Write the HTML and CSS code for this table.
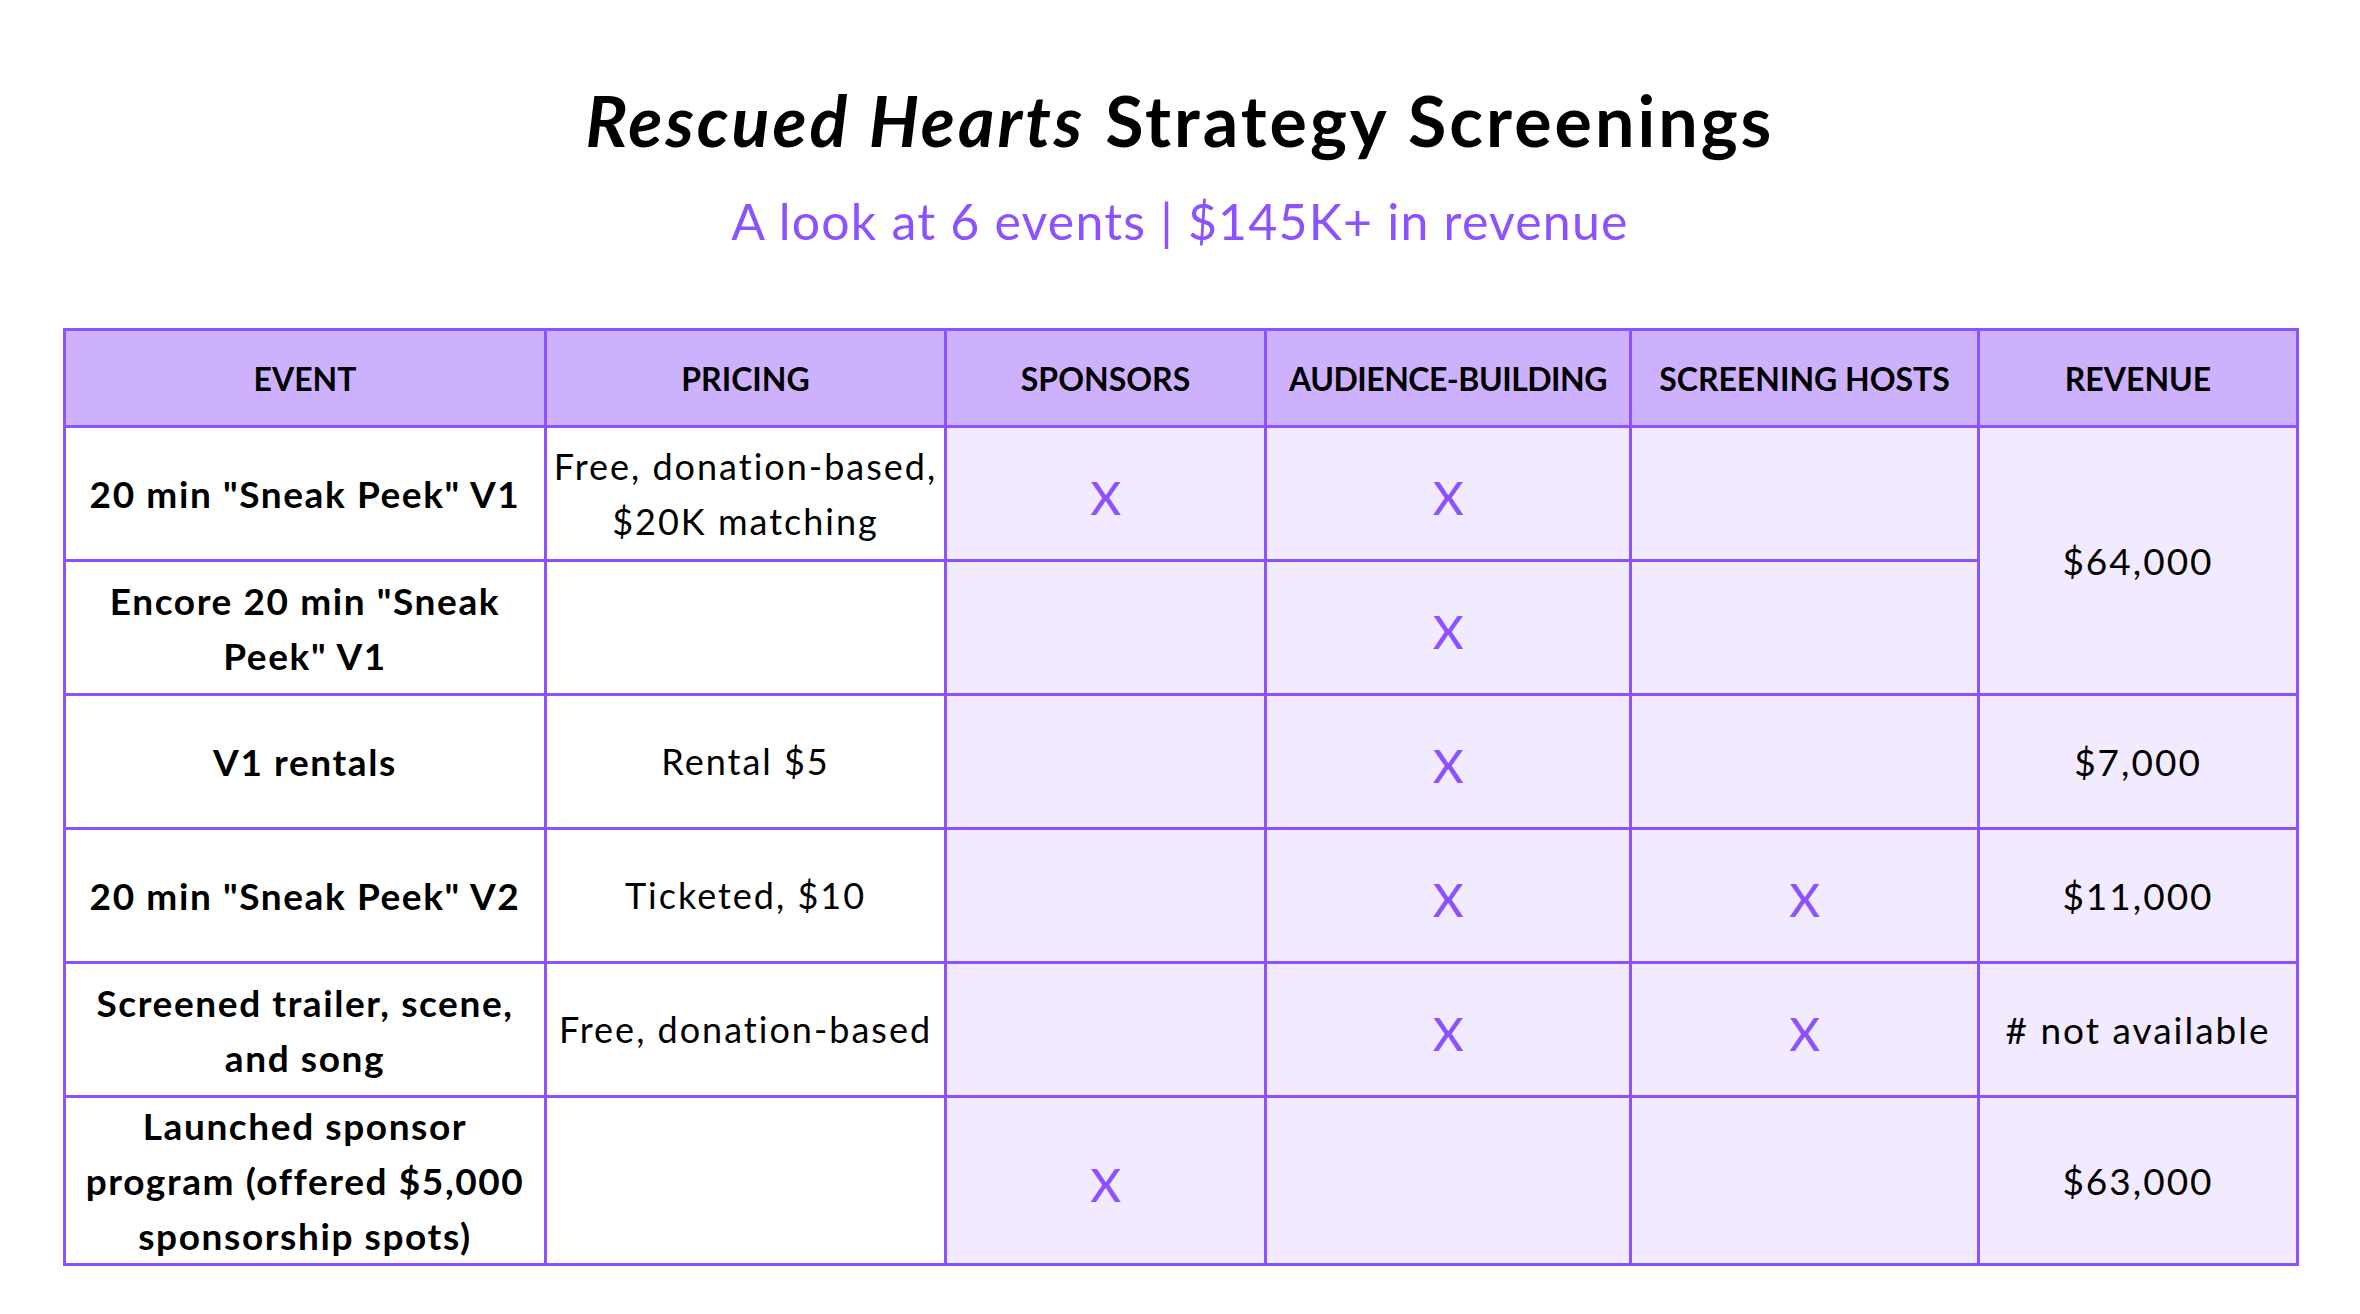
FILE: index.html
```html
<!DOCTYPE html>
<html lang="en">
<head>
<meta charset="utf-8">
<title>Rescued Hearts Strategy Screenings</title>
<link rel="stylesheet" href="styles.css">
</head>
<body>
<main class="page">
  <h1 class="title"><em>Rescued Hearts</em> Strategy Screenings</h1>
  <p class="subtitle">A look at 6 events | $145K+ in revenue</p>
  <table class="grid">
    <colgroup>
      <col class="c-event"><col class="c-pricing"><col class="c-sponsors"><col class="c-audience"><col class="c-hosts"><col class="c-revenue">
    </colgroup>
    <thead>
      <tr>
        <th>EVENT</th>
        <th>PRICING</th>
        <th>SPONSORS</th>
        <th class="tight">AUDIENCE-BUILDING</th>
        <th>SCREENING HOSTS</th>
        <th>REVENUE</th>
      </tr>
    </thead>
    <tbody>
      <tr>
        <td class="event">20 min "Sneak Peek" V1</td>
        <td class="plain">Free, donation-based,<br>$20K matching</td>
        <td class="tint"><span class="mark">X</span></td>
        <td class="tint"><span class="mark">X</span></td>
        <td class="tint"></td>
        <td class="tint rev" rowspan="2">$64,000</td>
      </tr>
      <tr>
        <td class="event">Encore 20 min "Sneak<br>Peek" V1</td>
        <td class="plain"></td>
        <td class="tint"></td>
        <td class="tint"><span class="mark">X</span></td>
        <td class="tint"></td>
      </tr>
      <tr>
        <td class="event">V1 rentals</td>
        <td class="plain">Rental $5</td>
        <td class="tint"></td>
        <td class="tint"><span class="mark">X</span></td>
        <td class="tint"></td>
        <td class="tint rev">$7,000</td>
      </tr>
      <tr>
        <td class="event">20 min "Sneak Peek" V2</td>
        <td class="plain">Ticketed, $10</td>
        <td class="tint"></td>
        <td class="tint"><span class="mark">X</span></td>
        <td class="tint"><span class="mark">X</span></td>
        <td class="tint rev">$11,000</td>
      </tr>
      <tr>
        <td class="event">Screened trailer, scene,<br>and song</td>
        <td class="plain">Free, donation-based</td>
        <td class="tint"></td>
        <td class="tint"><span class="mark">X</span></td>
        <td class="tint"><span class="mark">X</span></td>
        <td class="tint rev"># not available</td>
      </tr>
      <tr class="last">
        <td class="event">Launched sponsor<br>program (offered $5,000<br>sponsorship spots)</td>
        <td class="plain"></td>
        <td class="tint"><span class="mark">X</span></td>
        <td class="tint"></td>
        <td class="tint"></td>
        <td class="tint rev">$63,000</td>
      </tr>
    </tbody>
  </table>
</main>
</body>
</html>
```
FILE: styles.css
```css
html, body {
  margin: 0;
  padding: 0;
  background: #ffffff;
}

body {
  font-family: "Lato", "Liberation Sans", sans-serif;
  color: #000000;
}

.page {
  display: flex;
  flex-direction: column;
  align-items: center;
  padding-top: 78px;
}

.title {
  margin: 0;
  font-size: 70px;
  line-height: 84px;
  font-weight: 700;
  letter-spacing: 3px;
  text-align: center;
}

.title em {
  font-style: italic;
}

.subtitle {
  margin: 29px 0 0;
  font-size: 50px;
  line-height: 60px;
  letter-spacing: 1.2px;
  color: #8c52ff;
  text-align: center;
}

.grid {
  margin-top: 77px;
  margin-left: 2px;
  border-collapse: collapse;
  table-layout: fixed;
  width: 2233px;
  border: 3px solid #8c52ff;
}

.c-event { width: 481px; }
.c-pricing { width: 400px; }
.c-sponsors { width: 320px; }
.c-audience { width: 365px; }
.c-hosts { width: 348px; }
.c-revenue { width: 319px; }

.grid th,
.grid td {
  border: 3px solid #8c52ff;
  text-align: center;
  vertical-align: middle;
  padding: 0;
}

.grid th {
  background: #cdb1fd;
  height: 94px;
  font-size: 32px;
  font-weight: 700;
  white-space: nowrap;
}

.grid th.tight {
  letter-spacing: -0.5px;
}

.grid td {
  height: 131px;
  font-size: 36px;
  line-height: 55px;
  letter-spacing: 2px;
  white-space: nowrap;
}

.grid tr.last td {
  height: 163px;
}

.grid td.event {
  font-size: 37px;
  font-weight: 700;
  letter-spacing: 1.6px;
  background: #ffffff;
}

.plain {
  background: #ffffff;
}

.tint {
  background: #f2ebff;
}

.grid td.rev {
  font-size: 37px;
  letter-spacing: 2px;
}

.mark {
  display: inline-block;
  padding-top: 16px;
  font-size: 47px;
  font-weight: 500;
  line-height: 46px;
  letter-spacing: 0;
  color: #8c52ff;
}
```
